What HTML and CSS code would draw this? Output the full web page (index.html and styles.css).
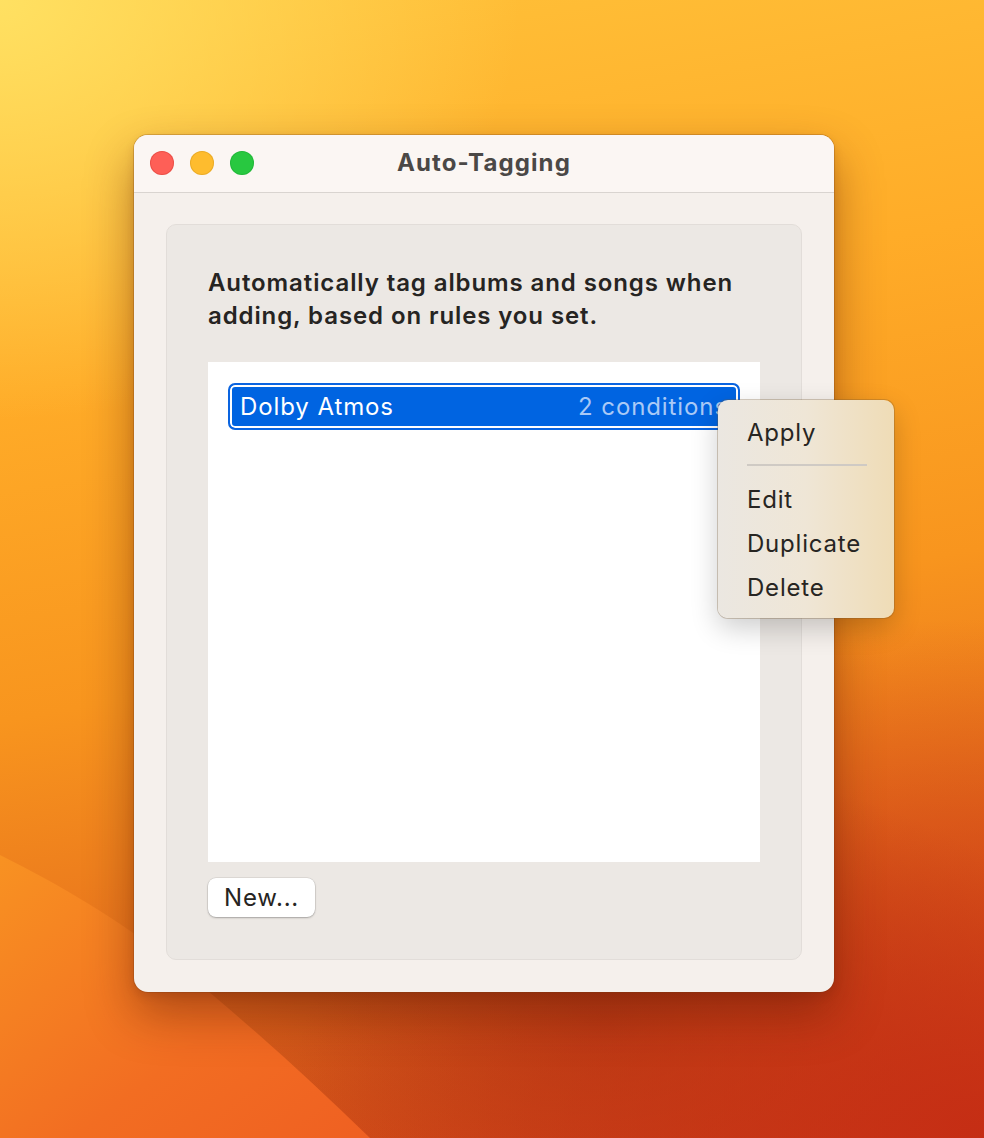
FILE: index.html
```html
<!DOCTYPE html>
<html>
<head>
<meta charset="utf-8">
<link rel="stylesheet" href="styles.css">
</head>
<body>
<div class="desktop">
  <svg class="wave" width="984" height="1138" viewBox="0 0 984 1138" aria-hidden="true">
    <defs>
      <linearGradient id="wv" x1="0" y1="0" x2="1" y2="1">
        <stop offset="0" stop-color="#f89222"/>
        <stop offset="0.6" stop-color="#f26d22"/>
        <stop offset="1" stop-color="#ef6022"/>
      </linearGradient>
    </defs>
    <path d="M0 855 C 60 885, 120 920, 180 968 C 250 1025, 310 1080, 370 1138 L0 1138 Z" fill="url(#wv)"/>
  </svg>

  <div class="window">
    <div class="titlebar">
      <div class="lights">
        <span class="light red"></span>
        <span class="light yellow"></span>
        <span class="light green"></span>
      </div>
      <div class="title">Auto-Tagging</div>
    </div>
    <div class="content">
      <div class="panel">
        <p class="desc">Automatically tag albums and songs when adding, based on rules you set.</p>
        <div class="list">
          <div class="row selected">
            <span class="row-name">Dolby Atmos</span>
            <span class="row-meta">2 conditions</span>
          </div>
        </div>
        <div class="actions">
          <button class="btn">New...</button>
        </div>
      </div>
    </div>
  </div>

  <div class="menu">
    <div class="menu-item">Apply</div>
    <div class="menu-sep"></div>
    <div class="menu-item">Edit</div>
    <div class="menu-item">Duplicate</div>
    <div class="menu-item">Delete</div>
  </div>
</div>
</body>
</html>
```

FILE: styles.css
```css
* { box-sizing: border-box; }

html, body {
  margin: 0;
  padding: 0;
}

body {
  font-family: Inter, "Noto Sans", "Liberation Sans", sans-serif;
  width: 984px;
  height: 1138px;
  overflow: hidden;
}

.desktop {
  position: relative;
  width: 984px;
  height: 1138px;
  padding: 135px 0 0 134px;
  background:
    radial-gradient(ellipse 520px 420px at 0px 0px, rgba(255, 226, 100, 0.95), rgba(255, 210, 80, 0) 100%),
    radial-gradient(ellipse 700px 520px at 984px 1138px, rgba(196, 44, 20, 0.95), rgba(200, 50, 20, 0) 100%),
    radial-gradient(ellipse 500px 260px at 600px 1020px, rgba(150, 40, 15, 0.55), rgba(150, 40, 15, 0) 100%),
    linear-gradient(170deg, #ffc23a 0%, #ffac28 30%, #f8951e 55%, #e46a1c 80%, #d8481a 100%);
}

.wave {
  position: absolute;
  left: 0;
  top: 0;
  z-index: 0;
}

.window {
  position: relative;
  z-index: 1;
  width: 700px;
  height: 857px;
  border-radius: 14px;
  background: #f5f0ec;
  box-shadow:
    0 0 0 1px rgba(120, 60, 20, 0.25),
    0 22px 48px rgba(90, 25, 5, 0.45),
    0 4px 10px rgba(90, 25, 5, 0.15);
  display: flex;
  flex-direction: column;
  overflow: hidden;
}

.titlebar {
  position: relative;
  height: 58px;
  flex: none;
  background: #fbf6f3;
  border-bottom: 1px solid #d9d4d0;
  display: flex;
  align-items: center;
  justify-content: center;
}

.lights {
  position: absolute;
  left: 16px;
  top: 16px;
  display: flex;
  gap: 16px;
}

.light {
  width: 24px;
  height: 24px;
  border-radius: 50%;
  display: block;
}
.light.red { background: #fe5f57; box-shadow: inset 0 0 0 1px rgba(200, 50, 40, 0.35); }
.light.yellow { background: #febc2e; box-shadow: inset 0 0 0 1px rgba(200, 140, 20, 0.35); }
.light.green { background: #28c840; box-shadow: inset 0 0 0 1px rgba(20, 150, 40, 0.3); }

.title {
  font-size: 24px;
  font-weight: 700;
  color: #4b4846;
  letter-spacing: 1.1px;
  margin-top: -2px;
}

.content {
  flex: 1;
  padding: 31px 32px 32px 32px;
  display: flex;
}

.panel {
  flex: 1;
  background: #ece8e4;
  border: 1px solid #e2ddd9;
  border-radius: 10px;
  padding: 41px 41px 0 41px;
  display: flex;
  flex-direction: column;
}

.desc {
  margin: 0;
  font-size: 24px;
  font-weight: 600;
  line-height: 33px;
  color: #262422;
  letter-spacing: 0.9px;
}

.list {
  margin-top: 30px;
  height: 500px;
  background: #ffffff;
  padding: 21px 20px 0 20px;
}

.row {
  height: 47px;
  border-radius: 7px;
  display: flex;
  align-items: center;
  justify-content: space-between;
  font-size: 24px;
  letter-spacing: 0.9px;
  padding: 0 10px 0 10px;
}

.row.selected {
  background: #0064e1;
  border: 2px solid #0a64e0;
  box-shadow: inset 0 0 0 2px #ffffff;
  color: #ffffff;
}

.row-name { color: #ffffff; }
.row-meta { color: #a9c9f6; white-space: nowrap; }

.actions {
  margin-top: 16px;
  display: flex;
}

.btn {
  font-family: inherit;
  font-size: 24px;
  letter-spacing: 0.8px;
  color: #262422;
  background: #ffffff;
  border: none;
  border-radius: 8px;
  height: 39px;
  padding: 0 16px;
  box-shadow: 0 0 0 0.5px rgba(0, 0, 0, 0.12), 0 1px 2px rgba(0, 0, 0, 0.25);
}

.menu {
  position: absolute;
  z-index: 2;
  left: 718px;
  top: 400px;
  width: 176px;
  height: 218px;
  border-radius: 10px;
  background: linear-gradient(90deg, #ebe7e1 0%, #efe6d6 50%, #efdcb6 100%);
  box-shadow:
    0 0 0 1px rgba(120, 90, 50, 0.3),
    0 10px 28px rgba(0, 0, 0, 0.2);
  padding: 14px 0 0 29px;
  display: flex;
  flex-direction: column;
}

.menu-item {
  font-size: 24px;
  letter-spacing: 0.8px;
  color: #272522;
  line-height: 44px;
  height: 44px;
}

.menu-item:first-child {
  line-height: 38px;
  height: 38px;
}

.menu-sep {
  width: 120px;
  height: 2px;
  background: #cfcac4;
  margin: 12px 0 12px 0;
}
```
